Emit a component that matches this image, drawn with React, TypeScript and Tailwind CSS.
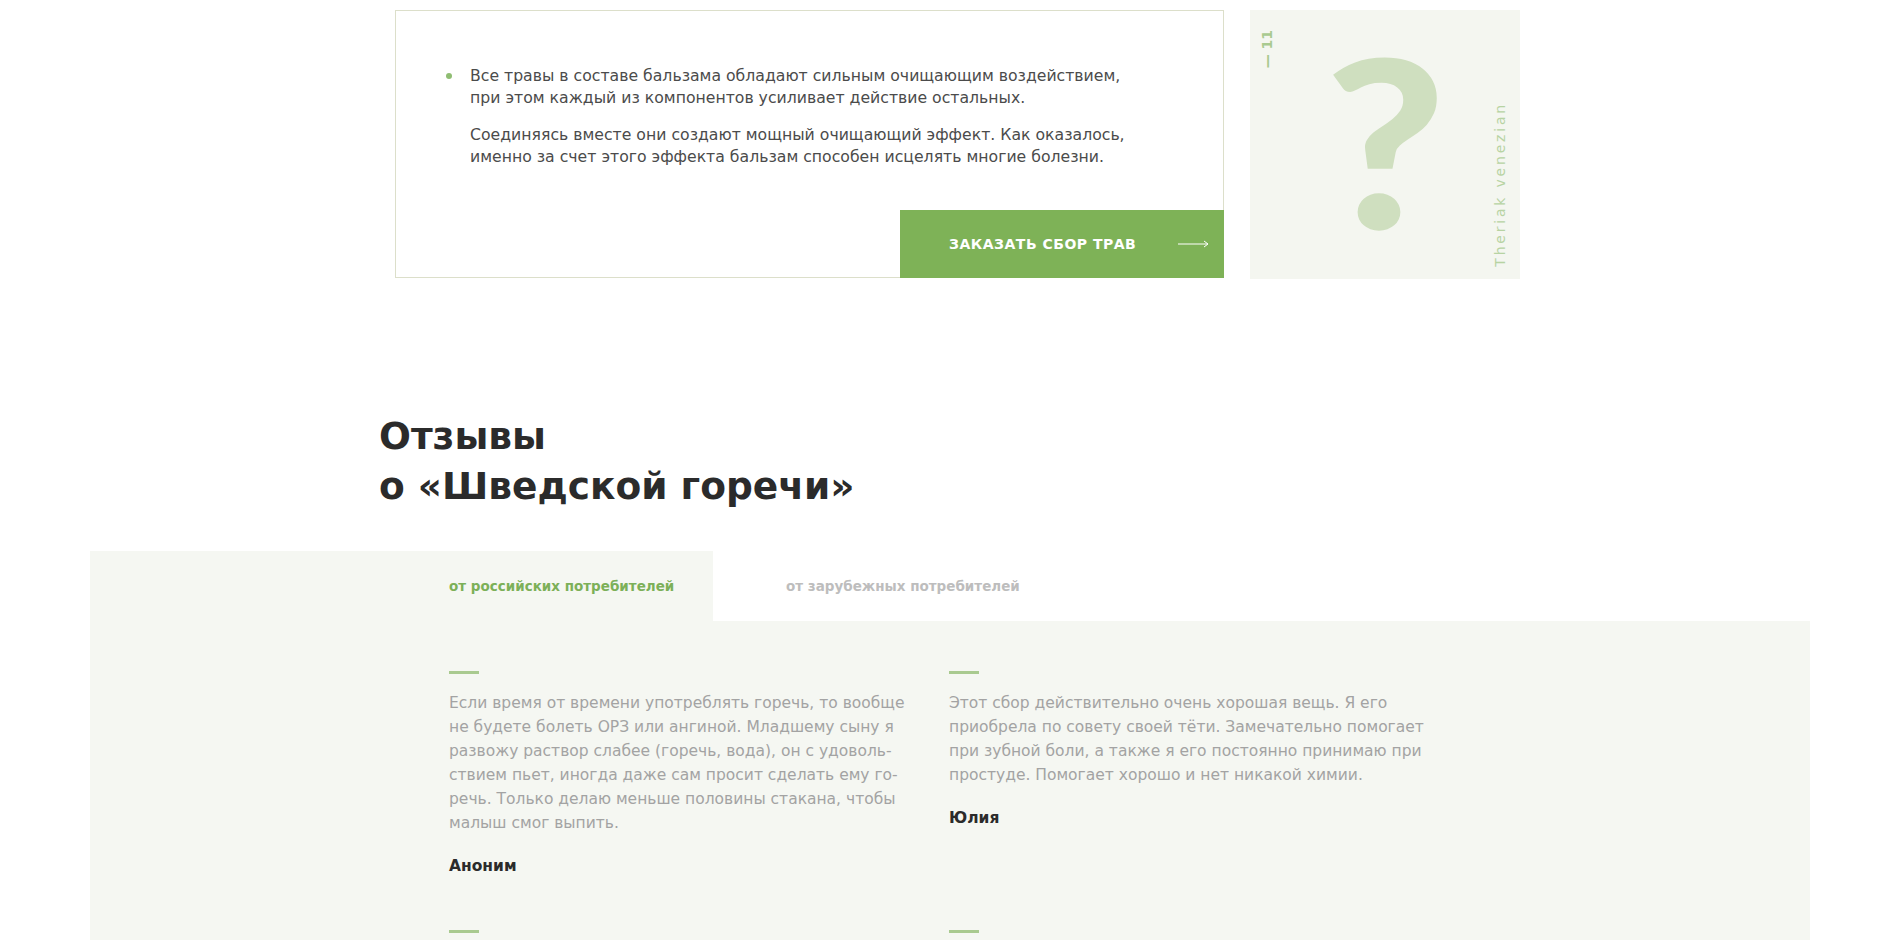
import React from 'react';

// Отзывы: отображаются в две колонки под табами
const reviews = [
    {
        text: 'Если время от времени употреблять горечь, то вообще не будете болеть ОРЗ или ангиной. Младшему сыну я развожу раствор слабее (горечь, вода), он с удоволь\u00ADствием пьет, иногда даже сам просит сделать ему го\u00ADречь. Только делаю меньше половины стакана, чтобы малыш смог выпить.',
        author: 'Аноним'
    },
    {
        text: 'Этот сбор действительно очень хорошая вещь. Я его приобрела по совету своей тёти. Замечательно помогает при зубной боли, а также я его постоянно принимаю при простуде. Помогает хорошо и нет никакой химии.',
        author: 'Юлия'
    },
    {
        text: 'Пью горечь уже несколько лет курсами, весной и осенью. Пищеварение наладилось, стала лучше спать и меньше уставать к вечеру.',
        author: 'Марина'
    },
    {
        text: 'Покупаю для всей семьи. Помогает при простуде и проблемах с желудком, вкус горький, но к нему быстро привыкаешь.',
        author: 'Сергей'
    }
];

const tabs = ['от российских потребителей', 'от зарубежных потребителей'];

const ArrowRight: React.FC = () => (
    <svg width="31" height="8" viewBox="0 0 31 8" fill="none">
        <path d="M0 4H30M26 1L30 4L26 7" stroke="#ffffff" strokeWidth="1" />
    </svg>
);

const ReviewCard: React.FC<{ text: string; author: string }> = ({ text, author }) => (
    <div>
        <div className="w-[30px] h-[3px] bg-[#a9ca90]" />
        <p className="mt-[17px] text-[15.5px] leading-[24px] text-[#a3a3a3]">{text}</p>
        <p className="mt-[19px] text-[15.5px] leading-[24px] font-bold text-[#2b2b2b]">{author}</p>
    </div>
);

const App: React.FC = () => {
    return (
        <div className="min-h-screen bg-white font-['DejaVu_Sans',sans-serif] overflow-hidden">
            <div className="w-[1150px] mx-auto">
                {/* Top: info card + numbered side tile */}
                <div className="flex gap-[26px] pl-[23px] pt-[10px]">
                    <div className="shrink-0 w-[829px] h-[268px] border border-[#dcdfca] flex flex-col">
                        <div className="pl-[50px] pt-[54px] pr-[40px] text-[15.7px] leading-[22px] text-[#4b4b4b]">
                            <div className="flex">
                                <span className="w-[6px] h-[6px] rounded-full bg-[#8fbd72] mt-[8px] mr-[18px] shrink-0" />
                                <div>
                                    <p>Все травы в составе бальзама обладают сильным очищающим воздействием,<br />при этом каждый из компонентов усиливает действие остальных.</p>
                                    <p className="mt-[15px]">Соединяясь вместе они создают мощный очищающий эффект. Как оказалось,<br />именно за счет этого эффекта бальзам способен исцелять многие болезни.</p>
                                </div>
                            </div>
                        </div>
                        <button className="mt-auto self-end -mr-px -mb-px w-[324px] h-[68px] bg-[#7eb257] flex items-center pl-[49px] pr-[15px] text-white text-[14px] font-bold tracking-[0.5px] uppercase">
                            <span>Заказать сбор трав</span>
                            <span className="ml-auto"><ArrowRight /></span>
                        </button>
                    </div>

                    <div className="relative shrink-0 w-[270px] h-[269px] bg-[#f4f6f0] flex items-center justify-center">
                        <span className="absolute left-[10px] top-[20px] [writing-mode:vertical-rl] rotate-180 text-[14px] font-bold text-[#a9ca90] leading-none">— 11</span>
                        <span className="mb-[12px] scale-x-[1.12] font-['Lato',sans-serif] text-[234px] leading-none font-black text-[#cfdfbf]">?</span>
                        <span className="absolute right-[13px] bottom-[12px] [writing-mode:vertical-rl] rotate-180 text-[14px] tracking-[2.8px] text-[#b7d3a3] leading-none">Theriak venezian</span>
                    </div>
                </div>

                <h2 className="mt-[132px] pl-[7px] text-[37.5px] leading-[50px] font-bold text-[#2b2b2b]">
                    Отзывы<br />о «Шведской горечи»
                </h2>
            </div>

            {/* Reviews with tabs */}
            <section className="mt-[40px] w-[1720px] ml-[90px] bg-[#f5f7f2] pb-[80px]">
                <div className="flex h-[70px] text-[13.5px] font-bold">
                    <button className="w-[623px] pl-[359px] text-left text-[#7cb058]">{tabs[0]}</button>
                    <button className="flex-1 bg-white pl-[73px] text-left text-[#bdbdbd]">{tabs[1]}</button>
                </div>
                <div className="grid grid-cols-[475px_475px] gap-x-[25px] gap-y-[52px] pl-[359px] pt-[50px]">
                    {reviews.map((r) => (
                        <ReviewCard key={r.author} text={r.text} author={r.author} />
                    ))}
                </div>
            </section>
        </div>
    );
};

export default App;
